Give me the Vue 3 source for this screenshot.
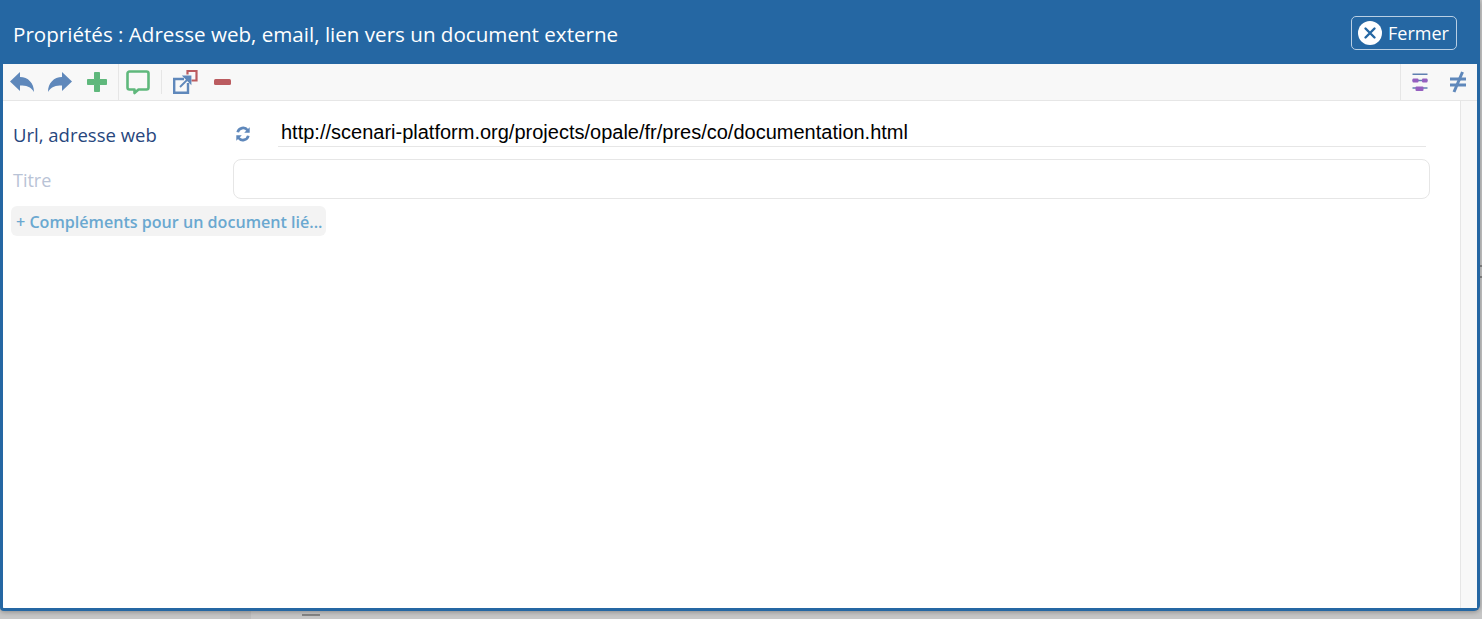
<script setup>
const url = 'http://scenari-platform.org/projects/opale/fr/pres/co/documentation.html'
</script>

<template>
  <div class="page">
    <div class="dialog">
      <header class="head">
        <h1 class="title">Propriétés : Adresse web, email, lien vers un document externe</h1>
        <button class="close">
          <svg width="24" height="24" viewBox="0 0 24 24"><circle cx="12" cy="12" r="12" fill="#fff"/><path d="M7.500 7.500l9 9M16.500 7.500l-9 9" stroke="#2567a3" stroke-width="2.400" stroke-linecap="round"/></svg>
          <span>Fermer</span>
        </button>
      </header>
      <div class="tools">
        <div class="group first">
          <svg width="26" height="22" viewBox="0 0 26 22"><path d="M1 10.500L11 1v5C19 6 25 12 25 21 22 15.500 17 14.500 11 14.500V20z" fill="#5f88bb"/></svg>
          <svg class="gap-b" width="26" height="22" viewBox="0 0 26 22"><path d="M25 10.500L15 1v5C7 6 1 12 1 21 4 15.500 9 14.500 15 14.500V20z" fill="#5f88bb"/></svg>
          <svg class="gap-c" width="22" height="22" viewBox="0 0 22 22"><path d="M8.500 1.500h5v7h7v5h-7v7h-5v-7h-7v-5h7z" fill="#5fb87c" stroke="#5fb87c" stroke-linejoin="round"/></svg>
        </div>
        <div class="group second">
          <svg width="26" height="26" viewBox="0 0 26 26"><path d="M4.500 2.500h17a2 2 0 0 1 2 2v14a2 2 0 0 1-2 2H13.500l-4 3.500v-3.500h-5a2 2 0 0 1-2-2v-14a2 2 0 0 1 2-2z" fill="none" stroke="#5fb87c" stroke-width="2.600" stroke-linejoin="round"/></svg>
        </div>
        <span class="sep"></span>
        <svg class="ext" width="26" height="26" viewBox="0 0 26 26">
          <path d="M15.500 5.500V2H24.500V11.500H19.500" fill="none" stroke="#bb5c60" stroke-width="2.200"/>
          <path d="M12 10H2.200v13.800H16V14" fill="none" stroke="#5f88bb" stroke-width="2.400"/>
          <path d="M8 18l7-7M12 7.500h6.500V14z" fill="#5f88bb" stroke="#5f88bb" stroke-width="1.800"/>
        </svg>
        <svg class="minus" width="17" height="6" viewBox="0 0 17 6"><rect width="17" height="6" rx="1.500" fill="#bb5c60"/></svg>
        <div class="grow"></div>
        <div class="group right">
          <svg width="18" height="18" viewBox="0 0 18 18">
            <path d="M1.500 1.200h15M1.500 7.500h15M1.500 15h15" stroke="#5f7fb0" stroke-width="1.500"/>
            <rect x="1.500" y="5.500" width="6" height="4" rx="1" fill="#9560c0"/>
            <rect x="11" y="5.500" width="5.500" height="4" rx="1" fill="#9560c0"/>
            <rect x="4.500" y="13.500" width="8" height="4.500" rx="1" fill="#9560c0"/>
          </svg>
          <svg class="neq" width="18" height="22" viewBox="0 0 18 22"><path d="M1 8h16M1 14h16" stroke="#5f88bb" stroke-width="3"/><path d="M13.500 1L5 21" stroke="#5f88bb" stroke-width="3"/></svg>
        </div>
      </div>
      <div class="body">
        <main class="form">
          <div class="row url-row">
            <label class="lab url-lab">Url, adresse web</label>
            <svg class="refresh" width="16" height="16" viewBox="0 0 16 16"><path d="M2.700 6.300A5.600 5.600 0 0 1 12.600 4.200M13.300 9.700a5.600 5.600 0 0 1-9.900 2.100" fill="none" stroke="#5f88bb" stroke-width="2.700"/><path d="M14.700 1.200L9.200 6.700h5.500zM1.300 14.800L6.800 9.300H1.300z" fill="#5f88bb"/></svg>
            <div class="url">{{ url }}</div>
          </div>
          <div class="row title-row">
            <label class="lab faded">Titre</label>
            <div class="input"></div>
          </div>
          <button class="more">+ Compléments pour un document lié...</button>
        </main>
        <aside class="side"></aside>
      </div>
    </div>
    <span class="bg-tile"></span>
    <span class="bg-grip"></span>
    <span class="bg-edge"></span>
  </div>
</template>

<style scoped>
.page {
  position: relative;
  width: 1482px;
  height: 619px;
  overflow: hidden;
  background: #c6c6c6;
  font-family: "Open Sans", "Noto Sans", sans-serif;
}
.dialog {
  position: relative;
  z-index: 1;
  box-sizing: border-box;
  width: 1480px;
  height: 611px;
  display: flex;
  flex-direction: column;
  background: #fff;
  border: 3px solid #2567a3;
  border-top: 0;
  border-radius: 0 0 6px 4px;
  box-shadow: 0 1px 5px rgba(0, 0, 0, 0.3);
}
.head {
  box-sizing: border-box;
  height: 64px;
  flex: none;
  display: flex;
  align-items: center;
  justify-content: space-between;
  padding: 4px 20px 0 10px;
  background: #2567a3;
  color: #fff;
}
.title {
  margin: 0;
  font-size: 20.6px;
  font-weight: 400;
}
.close {
  box-sizing: border-box;
  width: 106px;
  height: 34px;
  display: flex;
  align-items: center;
  gap: 6px;
  padding: 0 6px;
  margin-top: -2px;
  background: transparent;
  border: 1px solid #b9cfe4;
  border-radius: 5px;
  color: #fff;
  font: 18px "Open Sans", "Noto Sans", sans-serif;
}
.tools {
  height: 37px;
  flex: none;
  box-sizing: border-box;
  display: flex;
  align-items: center;
  background: #f8f8f8;
  border-bottom: 1px solid #e6e6e6;
}
.group {
  display: flex;
  align-items: center;
  height: 36px;
}
.first { padding-left: 6px; width: 116px; box-sizing: border-box; border-right: 1px solid #e6e6e6; }
.gap-b { margin-left: 12px; }
.gap-c { margin-left: 13px; }
.second { padding-left: 6px; width: 42px; box-sizing: border-box; }
.sep { width: 1px; height: 24px; background: #e6e6e6; margin-right: 10px; }
.ext { margin-right: 16px; margin-top: -1px; }
.minus { margin-top: -1px; }
.grow { flex: 1; }
.right { box-sizing: border-box; width: 77px; padding-left: 10px; border-left: 1px solid #e6e6e6; }
.neq { margin-left: 20px; }
.body {
  flex: 1;
  display: flex;
  min-height: 0;
}
.form {
  flex: 1;
  box-sizing: border-box;
  padding: 0 30px 0 8px;
}
.side {
  width: 17px;
  box-sizing: border-box;
  background: #f8f8f8;
  border-left: 1px solid #e6e6e6;
}
.row { display: flex; align-items: center; }
.url-row { height: 46px; padding-top: 19px; box-sizing: border-box; }
.lab {
  width: 222px;
  padding-left: 2px;
  font-size: 18.500px;
  color: #27467d;
  flex: none;
  box-sizing: border-box;
}
.url-lab { margin-top: 2px; }
.faded { color: #b9c3d6; font-size: 18px; padding-top: 2px; }
.refresh { margin-left: 2px; flex: none; margin-right: 27px; }
.url {
  flex: 1;
  box-sizing: border-box;
  height: 30px;
  margin-top: -3px;
  padding-left: 3px;
  border-bottom: 1px solid #e6e6e6;
  font: 20px/30px "Liberation Sans", Arial, sans-serif;
  color: #000;
  margin-right: 4px;
}
.title-row { margin-top: 12px; }
.input {
  flex: 1;
  height: 40px;
  box-sizing: border-box;
  border: 1px solid #e6e6e6;
  border-radius: 8px;
  background: #fff;
}
.more {
  display: block;
  box-sizing: border-box;
  height: 30px;
  width: 315px;
  margin-top: 7px;
  padding: 2px 5px 0;
  border: 0;
  border-radius: 6px;
  background: #f3f3f3;
  color: #6aa8d0;
  font: 600 16.100px "Open Sans", "Noto Sans", sans-serif;
  text-align: left;
  white-space: nowrap;
}
.bg-tile {
  position: absolute;
  left: 230px;
  top: 611px;
  width: 21px;
  height: 8px;
  background: #bcbcbc;
}
.bg-grip {
  position: absolute;
  left: 302px;
  top: 614px;
  width: 18px;
  height: 2px;
  background: #858585;
}
.bg-edge {
  position: absolute;
  left: 1480px;
  top: 265px;
  width: 2px;
  height: 9px;
  border-top: 2px solid #858585;
  border-bottom: 2px solid #858585;
}
</style>
